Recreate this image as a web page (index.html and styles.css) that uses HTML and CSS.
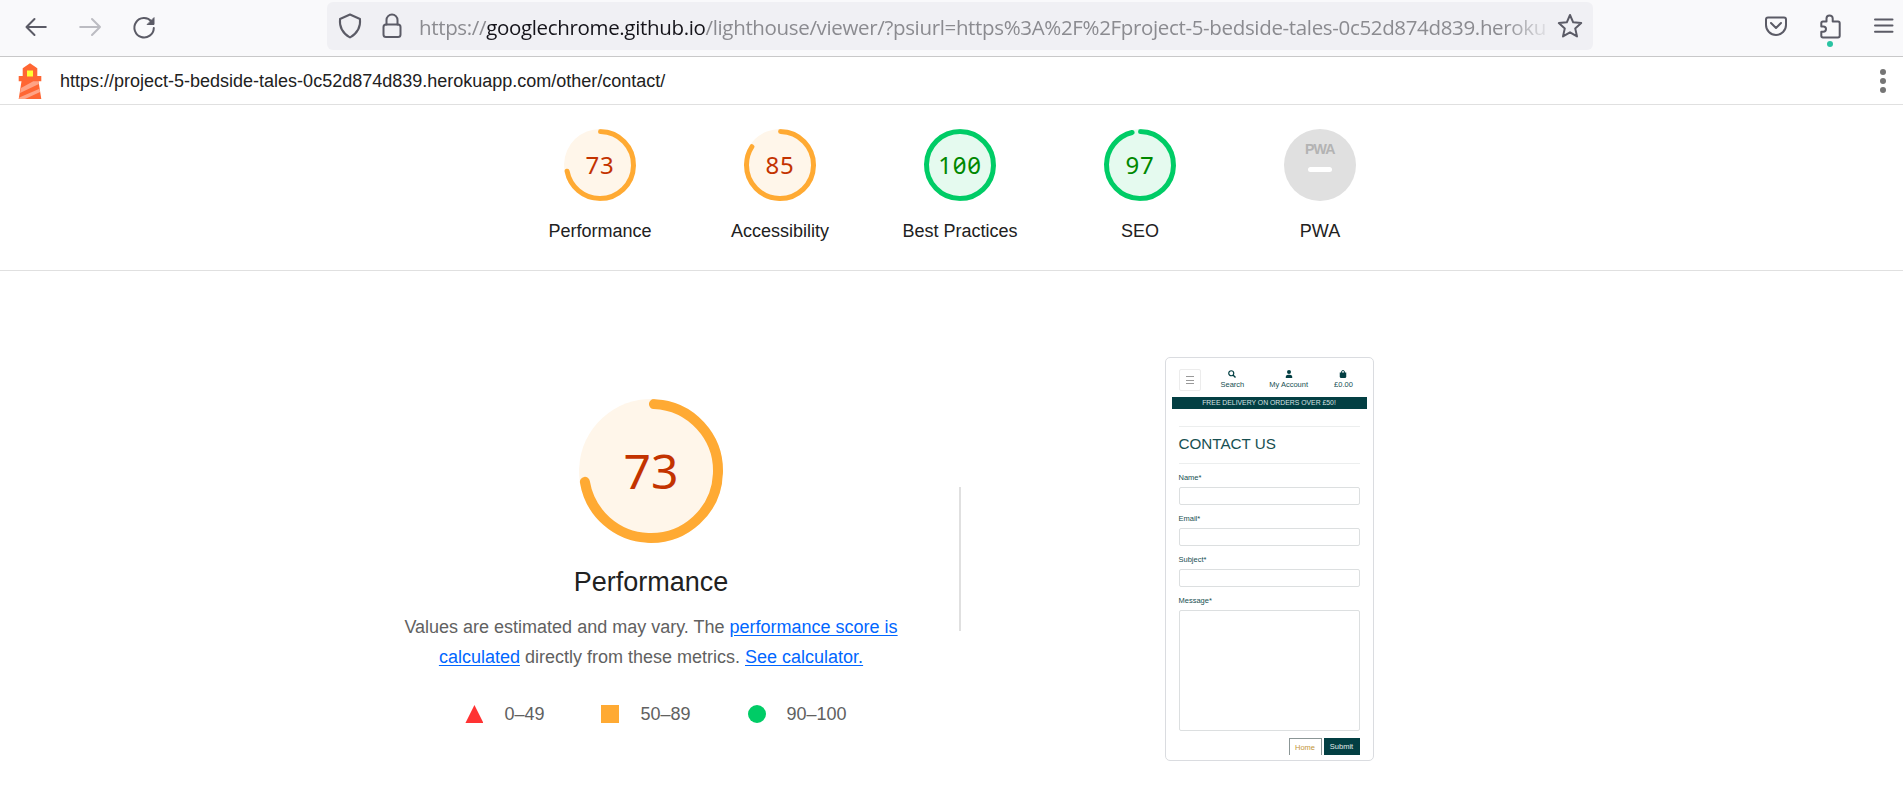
FILE: index.html
```html
<!DOCTYPE html>
<html lang="en">
<head>
<meta charset="utf-8">
<title>Lighthouse Report Viewer</title>
<link rel="stylesheet" href="styles.css">
</head>
<body>
<header class="browser">
  <nav class="nav-buttons">
    <svg class="ico back" width="24" height="24" viewBox="0 0 24 24"><path d="M21.800 11H2.500M10.500 3L2.500 11l8 8"/></svg>
    <svg class="ico forward" width="24" height="24" viewBox="0 0 24 24"><path d="M2.200 11H22M14 3l8 8-8 8"/></svg>
    <svg class="ico reload" width="24" height="24" viewBox="0 0 24 24"><path d="M19.500 5.500A9.700 9.700 0 1 0 21.800 12"/><path d="M22 2v6.500h-6.500z" fill="#5b5b66" stroke="#5b5b66" stroke-width="1"/></svg>
  </nav>
  <div class="urlbar">
    <svg class="ico" width="26" height="28" viewBox="0 0 26 28"><path d="M13 2.500l10 4.500q1.200 12-10 18.500Q1.800 19 3 7z"/></svg>
    <svg class="ico" width="22" height="28" viewBox="0 0 22 28"><rect x="2.500" y="12.500" width="17" height="12.500" rx="2.500"/><path d="M5.500 12.500V8a5.500 5.500 0 0 1 11 0v4.500"/></svg>
    <div class="address">https://<b>googlechrome.github.io</b>/lighthouse/viewer/?psiurl=https%3A%2F%2Fproject-5-bedside-tales-0c52d874d839.heroku</div>
    <svg class="ico star" width="26" height="26" viewBox="0 0 26 26"><path d="M13 2l3.200 7.300 8 .8-6 5.300 1.800 8L13 19.300 6 23.400l1.800-8-6-5.300 8-.8z"/></svg>
  </div>
  <div class="tools">
    <svg class="ico" width="24" height="24" viewBox="0 0 24 24"><path d="M4 3.500h16q2 0 2 2v5.500a10 10 0 0 1-20 0V5.500q0-2 2-2zM7 9l5 5 5-5"/></svg>
    <div class="extension">
      <svg class="ico" width="24" height="28" viewBox="0 0 24 28"><path d="M8.500 8.500V5.500a3.100 3.100 0 0 1 6.200 0v3H20q1.700 0 1.700 1.700v12.600q0 1.700-1.700 1.700H5q-1.700 0-1.700-1.700v-4h2a2.700 2.700 0 0 0 0-5.400h-2V10.200q0-1.700 1.700-1.700z"/></svg>
      <span class="dot"></span>
    </div>
    <svg class="ico menu" width="20" height="20" viewBox="0 0 20 20"><path d="M1 1.500h17.500M1 7.500h17.500M1 13.700h17.500"/></svg>
  </div>
</header>

<div class="topbar">
  <svg class="logo" width="24" height="36" viewBox="0 0 24 36"><path fill="#ff6633" d="M12 .3l7.300 5V13h4v5.300h-2.800L23.300 36H.7l2.800-17.700H.7V13h4V5.300z"/><path fill="#ffa385" d="M3 25l12.300-6.700h5.200l.4 2.700L2 30zM1.300 34.500l20.200-8.800.6 3.300L7 36H1z"/><path fill="#ffff33" d="M9 7.500h6v6H9z"/></svg>
  <span class="report-url">https://project-5-bedside-tales-0c52d874d839.herokuapp.com/other/contact/</span>
  <svg class="kebab" width="8" height="26" viewBox="0 0 8 26"><circle cx="4" cy="4" r="3"/><circle cx="4" cy="13" r="3"/><circle cx="4" cy="22" r="3"/></svg>
</div>

<section class="scores">
  <div class="score average"><div class="gauge"><svg viewBox="0 0 72 72"><circle class="base" cx="36" cy="36" r="36"/><circle class="arc" cx="36" cy="36" r="33.500" pathLength="100" stroke-dasharray="71.700 100"/></svg><span>73</span></div><p>Performance</p></div>
  <div class="score average"><div class="gauge"><svg viewBox="0 0 72 72"><circle class="base" cx="36" cy="36" r="36"/><circle class="arc" cx="36" cy="36" r="33.500" pathLength="100" stroke-dasharray="83.900 100"/></svg><span>85</span></div><p>Accessibility</p></div>
  <div class="score pass"><div class="gauge"><svg viewBox="0 0 72 72"><circle class="base" cx="36" cy="36" r="36"/><circle class="arc" cx="36" cy="36" r="33.500"/></svg><span>100</span></div><p>Best Practices</p></div>
  <div class="score pass"><div class="gauge"><svg viewBox="0 0 72 72"><circle class="base" cx="36" cy="36" r="36"/><circle class="arc" cx="36" cy="36" r="33.500" pathLength="100" stroke-dasharray="95.900 100"/></svg><span>97</span></div><p>SEO</p></div>
  <div class="score"><div class="gauge"><svg class="flat" viewBox="0 0 72 72"><circle cx="36" cy="36" r="36" fill="#e0e0e0"/><text class="pwa" x="21" y="25.300" textLength="29.500" lengthAdjust="spacingAndGlyphs">PWA</text><rect x="24" y="38" width="24" height="5" rx="2.500" fill="#fff"/></svg></div><p>PWA</p></div>
</section>

<main class="category">
  <section class="summary average">
    <div class="gauge large"><svg viewBox="0 0 144 144"><circle class="base" cx="72" cy="72" r="72"/><circle class="arc" cx="72" cy="72" r="67" pathLength="100" stroke-dasharray="71.700 100"/></svg><span>73</span></div>
    <h1>Performance</h1>
    <p class="description">Values are estimated and may vary. The <a>performance score is<br>calculated</a> directly from these metrics. <a>See calculator.</a></p>
    <div class="legend">
      <span><i class="fail"></i>0–49</span>
      <span><i class="mid"></i>50–89</span>
      <span><i class="good"></i>90–100</span>
    </div>
  </section>
  <div class="separator"></div>
  <section class="preview">
    <div class="phone">
      <div class="shop-nav">
        <div class="burger"><i></i><i></i><i></i></div>
        <div class="link search"><svg width="8" height="8" viewBox="0 0 16 16"><circle cx="6.500" cy="6.500" r="5" fill="none" stroke="#033f43" stroke-width="2.400"/><path d="M10 10l5 5" stroke="#033f43" stroke-width="2.800"/></svg>Search</div>
        <div class="link account"><svg width="8" height="8" viewBox="0 0 16 16"><circle cx="8" cy="4" r="4"/><path d="M1.500 16q-.5-6.500 5-6.500h3q5.500 0 5 6.500z"/></svg>My Account</div>
        <div class="link bag"><svg width="8" height="8" viewBox="0 0 16 16"><path d="M1.500 5h13v8q0 3-3 3h-7q-3 0-3-3z"/><path d="M5 7V4a3 3 0 0 1 6 0v3" fill="none" stroke="#033f43" stroke-width="1.800"/></svg>£0.00</div>
      </div>
      <div class="banner">FREE DELIVERY ON ORDERS OVER £50!</div>
      <form class="contact">
        <h2>CONTACT US</h2>
        <label>Name*</label><div class="field"></div>
        <label>Email*</label><div class="field"></div>
        <label>Subject*</label><div class="field"></div>
        <label>Message*</label><div class="field area"></div>
        <div class="actions"><span class="home">Home</span><span class="submit">Submit</span></div>
      </form>
    </div>
  </section>
</main>
</body>
</html>
```
FILE: styles.css
```css
* { box-sizing: border-box; }
body { margin: 0; height: 785px; overflow: hidden; background: #fff; color: #212121; font: 18px "Liberation Sans", Arial, sans-serif; }
p, h1, h2 { margin: 0; font-weight: 400; }
svg { display: block; flex: none; }

.browser { display: flex; height: 57px; padding-top: 2px; background: #f9f9fb; border-bottom: 1px solid #c8c8c9; }
.ico { fill: none; stroke: #5b5b66; stroke-width: 2; stroke-linecap: round; stroke-linejoin: round; }
.nav-buttons { display: flex; gap: 30px; width: 327px; padding: 14px 0 0 24px; }
.forward { stroke: #bcbcc2; }
.urlbar { display: flex; align-items: center; width: 1266px; height: 48px; padding-left: 10px; border-radius: 6px; background: #f0f0f4; }
.urlbar .ico + .ico { margin-left: 18px; }
.address { width: 1128px; margin-left: 16px; white-space: nowrap; color: #8b8b90; font: 20.500px/48px "Open Sans", sans-serif; letter-spacing: -.34px; padding-top: 2px; -webkit-mask-image: linear-gradient(90deg, #000 1085px, transparent 1135px); mask-image: linear-gradient(90deg, #000 1085px, transparent 1135px); }
.address b { color: #15141a; font-weight: 400; }
.star { margin-left: 10px; }
.tools { display: flex; gap: 30px; padding: 12px 0 0 171px; }
.tools > .menu { margin: 4px 0 0 2px; }
.extension { position: relative; height: 36px; margin-top: -1px; }
.dot { position: absolute; left: 9px; top: 28px; width: 6px; height: 6px; border-radius: 50%; background: #2ac3a2; }

.topbar { display: flex; align-items: center; height: 48px; padding: 0 16px 0 18px; border-bottom: 1px solid #e0e0e0; }
.report-url { flex: 1; margin-left: 18px; padding-top: 2px; }
.kebab { fill: #757575; }

.scores { display: flex; justify-content: center; height: 166px; padding: 24px 0 0 17px; border-bottom: 1px solid #e0e0e0; }
.score { width: 180px; text-align: center; }
.score p { margin-top: 19px; line-height: 22px; }
.gauge { display: grid; width: 72px; height: 72px; margin: 0 auto; place-items: center; font: 24px/1 "Noto Sans", sans-serif; font-variant-numeric: slashed-zero; letter-spacing: .8px; }
.gauge > * { grid-area: 1 / 1; }
.gauge svg { width: 100%; height: 100%; transform: rotate(-89deg); }
.gauge svg.flat { transform: none; }
.gauge span { z-index: 1; }
.pwa { fill: #b3b3b3; font: 700 15px "Liberation Sans", Arial, sans-serif; letter-spacing: -1px; }
.arc { fill: none; stroke-width: 5; stroke-linecap: round; }
.large .arc { stroke-width: 10; }
.average .base { fill: #fff6ea; }
.average .arc { stroke: #ffaa33; }
.average .gauge { color: #c33300; }
.pass .base { fill: #e5faef; }
.pass .arc { stroke: #00cc66; }
.pass .gauge { color: #008800; }
.gauge.large { width: 144px; height: 144px; font-size: 48px; letter-spacing: 0; }
.gauge.large svg { transform: rotate(-87.500deg); }

.category { display: flex; justify-content: center; padding-left: 17px; }
.summary { width: 618px; padding: 128px 0 0 2px; text-align: center; }
.summary h1 { margin-top: 22px; font-size: 27px; line-height: 34px; }
.description { margin-top: 13px; color: #616161; line-height: 30px; }
.description a { color: #0066ff; text-decoration: underline; text-underline-offset: 2px; }
.legend { display: flex; justify-content: center; gap: 57px; margin: 32px 0 0 10px; color: #616161; line-height: 20px; }
.legend span { display: flex; align-items: center; gap: 21px; }
.legend i { width: 18px; height: 18px; }
.fail { background: #ff3333; clip-path: polygon(50% 0, 100% 100%, 0 100%); }
.mid { background: #ffaa33; }
.good { border-radius: 50%; background: #00cc66; }
.separator { width: 2px; height: 144px; margin-top: 216px; background: #e0e0e0; }
.preview { display: flex; justify-content: center; width: 618px; padding: 86px 2px 0 0; }

.phone { width: 209px; height: 404px; padding: 6px 6px 0; border: 1px solid #dadce0; border-radius: 5px; color: #174f52; font-size: 7.500px; line-height: 9px; }
.shop-nav { display: flex; height: 33px; padding: 5px 7px 0; }
.burger { display: flex; flex-direction: column; justify-content: center; gap: 2.500px; width: 22px; height: 22px; padding: 0 6px; border: 1px solid #ececec; border-radius: 2px; }
.burger i { height: 1px; background: #999; }
.link { display: flex; flex-direction: column; align-items: center; gap: 2px; padding-top: 1px; white-space: nowrap; }
.link svg { fill: #033f43; }
.link.search { margin-left: 20px; }
.link.account { margin-left: 25px; }
.link.bag { margin-left: 26px; }
.banner { height: 12px; background: #033f43; color: #d8e3e3; text-align: center; font-size: 6.850px; line-height: 11px; }
.contact { padding: 17px 7px 0; }
.contact h2 { height: 38px; margin-bottom: 9px; border: solid #eceeee; border-width: 1px 0; font-size: 15.200px; line-height: 34px; }
.contact label { display: block; height: 14px; }
.field { height: 18px; margin-bottom: 9px; border: 1px solid #dcdfe0; border-radius: 2px; }
.field.area { height: 121px; margin-bottom: 7px; }
.actions { display: flex; justify-content: flex-end; gap: 2px; line-height: 17px; text-align: center; }
.home { width: 33px; height: 17px; border: 1px solid #8b9696; border-bottom: 0; color: #c39538; }
.submit { width: 36px; height: 17px; background: #033f43; color: #e2eaea; }
```
